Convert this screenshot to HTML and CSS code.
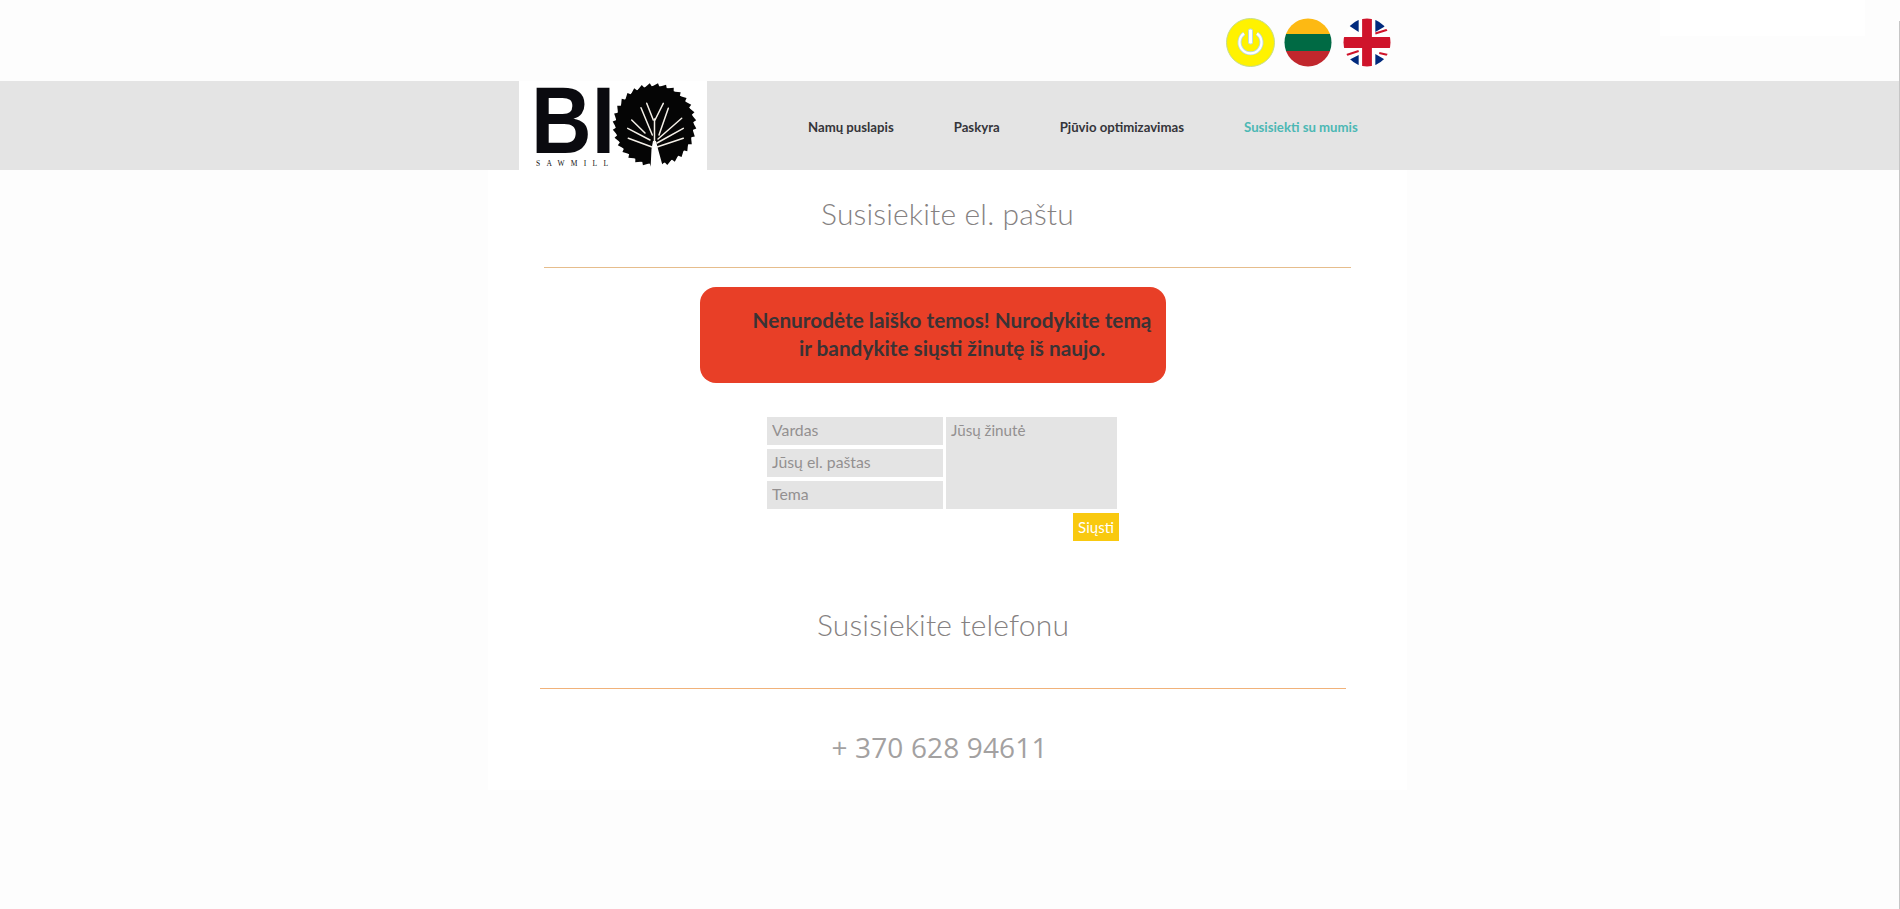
FILE: index.html
```html
<!DOCTYPE html>
<html lang="lt">
<head>
<meta charset="utf-8">
<title>Bio Sawmill</title>
<link rel="stylesheet" href="styles.css">
</head>
<body>
<div class="top-patch"></div>
<div class="edge-line"></div>
<div class="topbar">
  <svg class="round-icon" width="49" height="49" viewBox="0 0 49 49">
    <circle cx="24.5" cy="24.5" r="24" fill="#fff200" stroke="#c5dc8c" stroke-width="1"/>
    <path d="M18 15.500 A11 11 0 1 0 31 15.500" fill="none" stroke="#bcd9dc" stroke-width="4"/>
    <path d="M18 15.500 A11 11 0 1 0 31 15.500" fill="none" stroke="#fff" stroke-width="2.200"/>
    <rect x="22.500" y="11" width="4" height="15" rx="1.500" fill="#fff" stroke="#bcd9dc" stroke-width="1"/>
  </svg>
  <svg class="round-icon" width="48" height="49" viewBox="0 0 49 49" preserveAspectRatio="none">
    <defs><clipPath id="c1"><circle cx="24.5" cy="24.5" r="24"/></clipPath></defs>
    <g clip-path="url(#c1)">
      <rect width="49" height="16" fill="#fdb913"/>
      <rect y="16" width="49" height="17" fill="#006a44"/>
      <rect y="33" width="49" height="16" fill="#c1272d"/>
    </g>
  </svg>
  <svg class="round-icon flag-uk" width="48" height="49" viewBox="0 0 49 49" preserveAspectRatio="none">
    <defs><clipPath id="c2"><circle cx="24.5" cy="24.5" r="24"/></clipPath></defs>
    <g clip-path="url(#c2)">
      <rect width="49" height="49" fill="#fff"/>
      <path d="M16 -1 L16 14 L2 5 L2 -1 Z M33 -1 L33 14 L47 6 L47 -1 Z M16 50 L16 37 L2 44 L2 50 Z M33 50 L33 36 L47 44 L47 50 Z" fill="#012a7d"/>
      <path d="M33 15.500 L46 11.500 M2 37.500 L16 33 M37 35 L46 37" stroke="#cf142b" stroke-width="2" fill="none"/>
      <rect x="19.500" width="10" height="49" fill="#cf142b"/>
      <rect y="19" width="49" height="11" fill="#cf142b"/>
    </g>
  </svg>
</div>
<header class="header">
  <a class="logo" href="#">
    <svg width="188" height="89" viewBox="0 0 188 89">
      <rect width="188" height="89" fill="#fff"/>
      <text class="logo-bi" x="12" y="72" textLength="84" lengthAdjust="spacingAndGlyphs">BI</text>
      <text class="logo-sub" x="17" y="85" textLength="72">SAWMILL</text>
      <defs><path id="tooth" d="M-3.500 -38 L3.500 -41.800 L5 -38 Z" fill="#050505"/></defs>
      <g transform="translate(135.5 44)">
        <circle r="39" fill="#050505"/>
        <use href="#tooth"/><use href="#tooth" transform="rotate(11.25)"/><use href="#tooth" transform="rotate(22.5)"/><use href="#tooth" transform="rotate(33.75)"/>
        <use href="#tooth" transform="rotate(45)"/><use href="#tooth" transform="rotate(56.25)"/><use href="#tooth" transform="rotate(67.5)"/><use href="#tooth" transform="rotate(78.75)"/>
        <use href="#tooth" transform="rotate(90)"/><use href="#tooth" transform="rotate(101.25)"/><use href="#tooth" transform="rotate(112.5)"/><use href="#tooth" transform="rotate(123.75)"/>
        <use href="#tooth" transform="rotate(135)"/><use href="#tooth" transform="rotate(146.25)"/><use href="#tooth" transform="rotate(157.5)"/><use href="#tooth" transform="rotate(168.75)"/>
        <use href="#tooth" transform="rotate(180)"/><use href="#tooth" transform="rotate(191.25)"/><use href="#tooth" transform="rotate(202.5)"/><use href="#tooth" transform="rotate(213.75)"/>
        <use href="#tooth" transform="rotate(225)"/><use href="#tooth" transform="rotate(236.25)"/><use href="#tooth" transform="rotate(247.5)"/><use href="#tooth" transform="rotate(258.75)"/>
        <use href="#tooth" transform="rotate(270)"/><use href="#tooth" transform="rotate(281.25)"/><use href="#tooth" transform="rotate(292.5)"/><use href="#tooth" transform="rotate(303.75)"/>
        <use href="#tooth" transform="rotate(315)"/><use href="#tooth" transform="rotate(326.25)"/><use href="#tooth" transform="rotate(337.5)"/><use href="#tooth" transform="rotate(348.75)"/>
      </g>
      <path d="M131.500 88 L132.500 68 L134 60 L137 60 L139 68 L144.500 88 Z" fill="#fff"/>
      <g fill="none" stroke="#f4f0e8" stroke-width="1.500" stroke-linecap="round">
        <path d="M135.500 62 L135.500 38"/>
        <path d="M108.700 47.300 L131 59"/><path d="M112.700 39 L126 52"/><path d="M109.300 57.300 L133 66"/>
        <path d="M122 26.700 L133.300 54"/><path d="M127.700 22.300 L134.300 39"/><path d="M144.300 22.300 L136 39"/>
        <path d="M149.300 27.300 L140 54"/><path d="M162.700 37.300 L139 58"/><path d="M164.300 47.300 L138 62"/><path d="M164.300 57.300 L138 66"/>
      </g>
    </svg>
  </a>
  <nav class="nav">
    <a href="#">Namų puslapis</a>
    <a href="#">Paskyra</a>
    <a href="#">Pjūvio optimizavimas</a>
    <a href="#" class="active">Susisiekti su mumis</a>
  </nav>
</header>
<main class="panel">
  <h2 class="title">Susisiekite el. paštu</h2>
  <hr class="rule">
  <div class="alert">Nenurodėte laiško temos! Nurodykite temą<br>ir bandykite siųsti žinutę iš naujo.</div>
  <form class="form">
    <div class="fields">
      <input class="field" type="text" placeholder="Vardas">
      <input class="field" type="text" placeholder="Jūsų el. paštas">
      <input class="field" type="text" placeholder="Tema">
      <textarea class="field message" placeholder="Jūsų žinutė"></textarea>
    </div>
    <button class="send" type="button">Siųsti</button>
  </form>
  <h2 class="title title-phone">Susisiekite telefonu</h2>
  <hr class="rule rule-phone">
  <p class="phone">+ 370 628 94611</p>
</main>
</body>
</html>
```
FILE: styles.css
```css
* { box-sizing: border-box; }
html, body { margin: 0; padding: 0; }
body {
  position: relative;
  min-height: 909px;
  overflow: hidden;
  background: #fdfdfd;
  font-family: "Lato", "Open Sans", sans-serif;
}
.top-patch {
  position: absolute;
  left: 1660px;
  top: 0;
  width: 205px;
  height: 36px;
  background: #fff;
}
.edge-line {
  position: absolute;
  right: 0;
  top: 21px;
  bottom: 0;
  width: 1px;
  background: #c6c6c6;
  z-index: 2;
}
.topbar {
  position: relative;
  display: flex;
  gap: 9px;
  height: 81px;
  padding: 18px 0 0 1226px;
}
.round-icon { display: block; flex: none; }
.flag-uk { margin-left: 2px; }
.header {
  position: relative;
  display: flex;
  align-items: center;
  height: 89px;
  padding-left: 519px;
  background: #e4e4e4;
}
.logo { display: block; height: 89px; }
.logo svg { display: block; overflow: visible; }
.logo-bi {
  font-family: "Liberation Sans", sans-serif;
  font-weight: 700;
  font-size: 95px;
  fill: #0a0a0f;
}
.logo-sub {
  font-family: "Liberation Serif", serif;
  font-size: 7.500px;
  fill: #111;
}
.nav { display: flex; gap: 60px; margin-left: 101px; padding-top: 2px; }
.nav a {
  color: #35353a;
  font-size: 13.200px;
  font-weight: 700;
  text-decoration: none;
}
.nav a.active { color: #4cb8b4; }
.panel {
  width: 919px;
  height: 620px;
  margin-left: 488px;
  padding-top: 25px;
  background: #fff;
}
.title {
  margin: 0;
  color: #858181;
  font-size: 30px;
  font-weight: 300;
  letter-spacing: .15px;
  line-height: 36px;
  text-align: center;
}
.rule {
  width: 807px;
  height: 1px;
  margin: 36px 0 0 56px;
  border: 0;
  background: #e6bd8c;
}
.alert {
  width: 466px;
  height: 96px;
  margin: 19px 0 0 212px;
  padding: 19px 0 0 38px;
  border-radius: 16px;
  background: #e83f27;
  color: #3a3335;
  font-size: 20.800px;
  font-weight: 700;
  line-height: 28px;
  text-align: center;
}
.form {
  display: flex;
  flex-direction: column;
  width: 352px;
  margin: 34px 0 0 279px;
}
.fields {
  display: grid;
  grid-template-columns: 176px 171px;
  grid-template-rows: 28px 28px 28px;
  column-gap: 3px;
  row-gap: 4px;
}
.field {
  display: block;
  width: 100%;
  height: 28px;
  padding: 0 5px 4px;
  border: 0;
  border-radius: 0;
  outline: 0;
  background: #e4e4e4;
  color: #939090;
  font-family: "Lato", "Open Sans", sans-serif;
  font-size: 15.800px;
}
.field::placeholder { color: #939090; opacity: 1; }
.message {
  grid-column: 2;
  grid-row: 1 / 4;
  height: 92px;
  padding-top: 4px;
  font-size: 15.200px;
  resize: none;
}
.send {
  align-self: flex-end;
  width: 46px;
  height: 28px;
  margin-top: 4px;
  padding: 0;
  border: 0;
  background: #f9c90f;
  color: #fff;
  font-family: "Lato", "Open Sans", sans-serif;
  font-size: 15px;
}
.title-phone { margin: 65px 0 0; padding-right: 9px; }
.rule-phone { width: 806px; margin: 46px 0 0 52px; background: #f1b27a; }
.phone {
  margin: 39px 0 0;
  padding-right: 16px;
  color: #a3a1a1;
  font-family: "Open Sans", sans-serif;
  font-size: 28px;
  letter-spacing: .15px;
  line-height: 38px;
  text-align: center;
}
```
